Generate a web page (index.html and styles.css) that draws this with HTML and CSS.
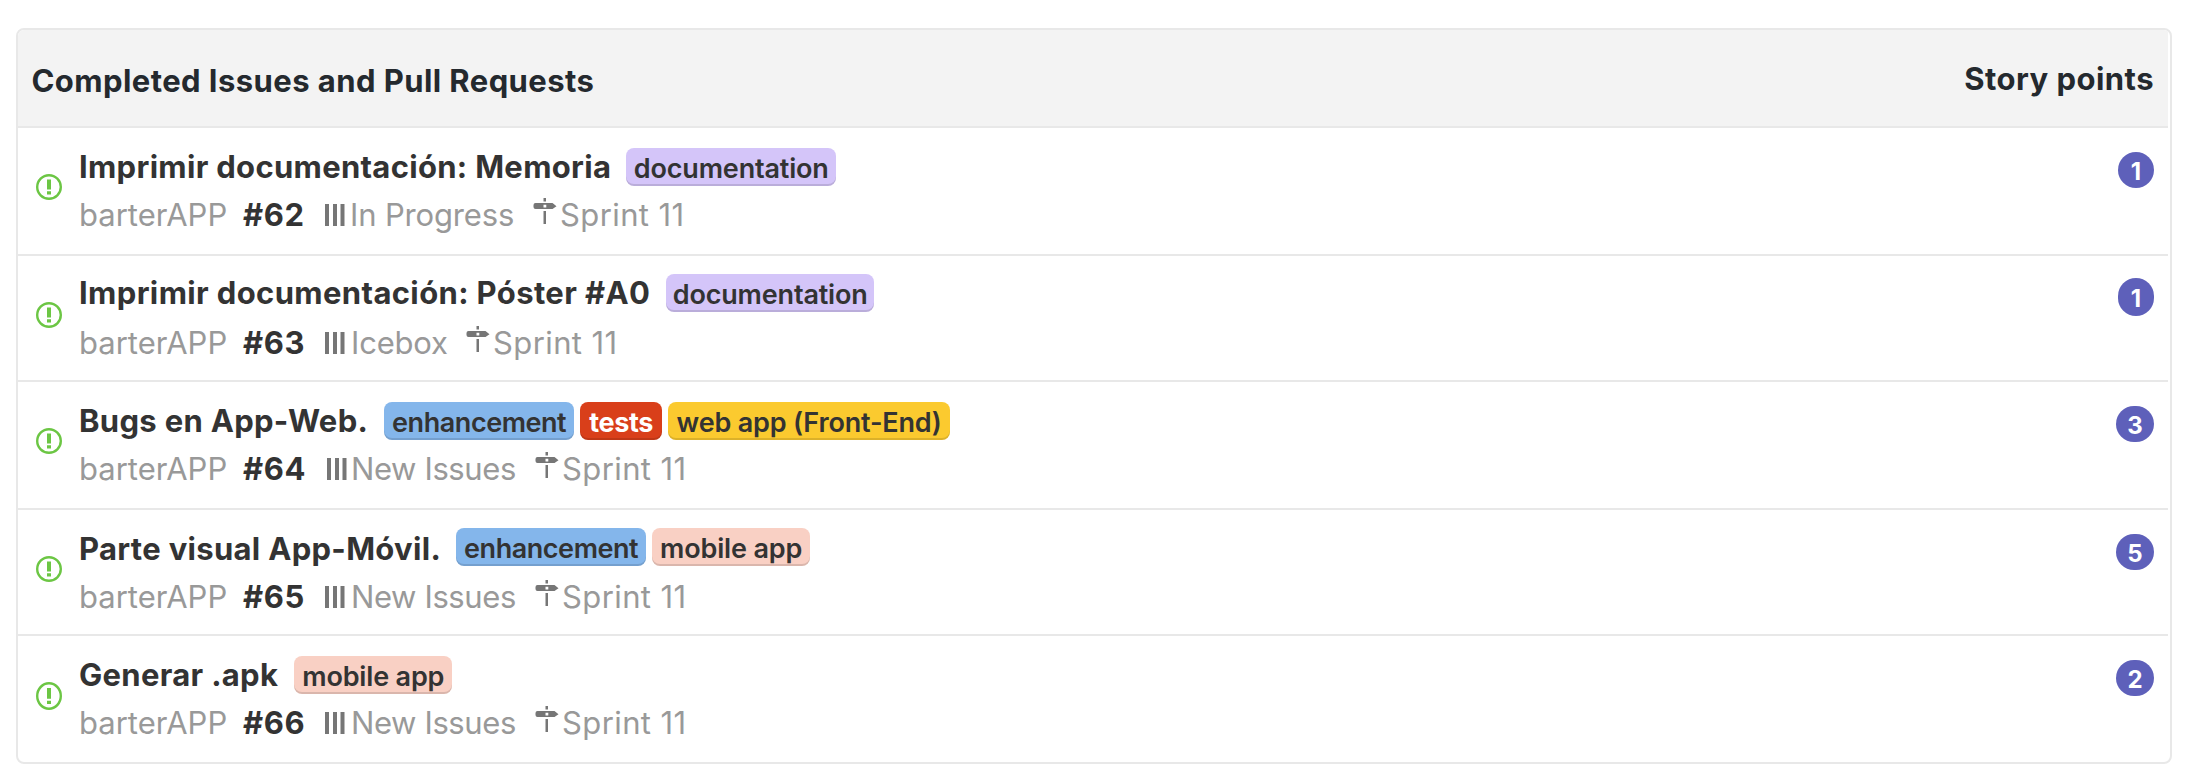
FILE: index.html
```
<!DOCTYPE html>
<html lang="es">
<head>
<meta charset="utf-8">
<title>Completed Issues and Pull Requests</title>
<link rel="stylesheet" href="styles.css">
</head>
<body>
<svg class="sprites" width="0" height="0" aria-hidden="true">
  <symbol id="open" viewBox="0 0 26 26" preserveAspectRatio="none"><circle cx="13" cy="13" r="11.800" fill="none" stroke="#6cc644" stroke-width="2.400"/><path fill="#6cc644" d="M11 5.500h4v10h-4zM11 17.300h4v3.200h-4z"/></symbol>
  <symbol id="bars" viewBox="0 0 20 22"><path fill="#767676" d="M0 0h4v22H0zM8 0h4v22H8zM15.500 0h4v22h-4z"/></symbol>
  <symbol id="sign" viewBox="0 0 24 26"><path fill="#767676" fill-rule="evenodd" d="M10.500 0h2.500v3.500h-2.500zM2.500 5h17l4 3.300L19.500 11h-17Q.5 11 .5 9V7Q.5 5 2.500 5zM10.500 6.800v2.800h2.800V6.800zM10.500 13h2.500v13h-2.500z"/></symbol>
</svg>
<section class="panel">
  <header class="head"><h1 class="head-title">Completed Issues and Pull Requests</h1><span class="head-points">Story points</span></header>
  <article class="row">
    <svg class="state"><use href="#open"/></svg>
    <div class="body">
      <div class="line"><h2 class="title">Imprimir documentación: Memoria</h2><span class="label doc wide">documentation</span></div>
      <div class="meta"><span class="repo">barterAPP</span><b class="num">#62</b><svg class="bars"><use href="#bars"/></svg><span class="pipe progress">In Progress</span><svg class="sign"><use href="#sign"/></svg><span class="sprint">Sprint 11</span></div>
    </div>
    <span class="points">1</span>
  </article>
  <article class="row short raised">
    <svg class="state"><use href="#open"/></svg>
    <div class="body">
      <div class="line"><h2 class="title">Imprimir documentación: Póster #A0</h2><span class="label doc">documentation</span></div>
      <div class="meta"><span class="repo">barterAPP</span><b class="num">#63</b><svg class="bars"><use href="#bars"/></svg><span class="pipe icebox">Icebox</span><svg class="sign"><use href="#sign"/></svg><span class="sprint">Sprint 11</span></div>
    </div>
    <span class="points tall">1</span>
  </article>
  <article class="row">
    <svg class="state"><use href="#open"/></svg>
    <div class="body">
      <div class="line"><h2 class="title roomy">Bugs en App-Web.</h2><span class="label enh">enhancement</span><span class="label tests">tests</span><span class="label web">web app (Front-End)</span></div>
      <div class="meta"><span class="repo">barterAPP</span><b class="num">#64</b><svg class="bars shifted"><use href="#bars"/></svg><span class="pipe">New Issues</span><svg class="sign"><use href="#sign"/></svg><span class="sprint">Sprint 11</span></div>
    </div>
    <span class="points broad">3</span>
  </article>
  <article class="row short">
    <svg class="state"><use href="#open"/></svg>
    <div class="body">
      <div class="line"><h2 class="title">Parte visual App-Móvil.</h2><span class="label enh">enhancement</span><span class="label mobile">mobile app</span></div>
      <div class="meta"><span class="repo">barterAPP</span><b class="num">#65</b><svg class="bars"><use href="#bars"/></svg><span class="pipe">New Issues</span><svg class="sign"><use href="#sign"/></svg><span class="sprint">Sprint 11</span></div>
    </div>
    <span class="points broad">5</span>
  </article>
  <article class="row last">
    <svg class="state"><use href="#open"/></svg>
    <div class="body">
      <div class="line"><h2 class="title roomy">Generar .apk</h2><span class="label mobile">mobile app</span></div>
      <div class="meta"><span class="repo">barterAPP</span><b class="num">#66</b><svg class="bars"><use href="#bars"/></svg><span class="pipe">New Issues</span><svg class="sign"><use href="#sign"/></svg><span class="sprint">Sprint 11</span></div>
    </div>
    <span class="points broad">2</span>
  </article>
</section>
</body>
</html>
```
FILE: styles.css
```
* { box-sizing: border-box; }
body {
  margin: 0;
  padding: 28px 38px 0 16px;
  background: #fff;
  color: #333;
  font-family: Inter, "Noto Sans", sans-serif;
  font-size: 31px;
}
h1, h2 { margin: 0; font-size: inherit; }
.sprites { display: block; }
.panel {
  height: 736px;
  padding-right: 2px;
  border: 2px solid #e8e8e8;
  border-radius: 8px;
  overflow: hidden;
}
.head {
  display: flex;
  justify-content: space-between;
  height: 98px;
  padding: 31px 14px 0 13.5px;
  border-bottom: 2px solid #e8e8e8;
  background: #f3f3f3;
  color: #24292e;
  font-weight: 700;
  line-height: 40px;
}
.head-title { letter-spacing: 0.43px; }
.head-points { letter-spacing: 0.47px; margin-top: -2px; }

.row {
  display: flex;
  align-items: flex-start;
  height: 128px;
  padding: 18px 14px 0 18px;
  border-bottom: 2px solid #e8e8e8;
}
.short { height: 126px; }
.last { border-bottom: 0; }
.state { width: 26px; height: 26px; margin-top: 28px; flex: none; }
.last .state { height: 28px; }
.body { flex: 1; padding-left: 17px; }
.line { display: flex; align-items: flex-start; height: 41px; }
.title {
  margin: 1px 15px 0 0;
  font-weight: 700;
  line-height: 40px;
  letter-spacing: 0.31px;
  white-space: nowrap;
}
.roomy { margin-right: 16px; }
.raised .title { margin: -1px 16px 0 0; letter-spacing: 0.37px; }
.label {
  height: 38px;
  margin: 2px 6px 0 0;
  border-radius: 8px;
  box-shadow: inset 0 -2px 0 rgba(0, 0, 0, 0.12);
  font-size: 27px;
  font-weight: 600;
  line-height: 41px;
  text-align: center;
  letter-spacing: -0.17px;
  white-space: nowrap;
}
.short .label { margin-top: 0; }
.doc { width: 208px; background: #d4c5f9; }
.wide { width: 210px; }
.enh { width: 190px; background: #84b6eb; letter-spacing: -0.45px; }
.tests { width: 82px; background: #d93f1a; color: #fff; font-weight: 700; letter-spacing: -0.38px; }
.web { width: 282px; background: #fbca2f; }
.mobile { width: 158px; background: #f9d0c4; }

.meta {
  display: flex;
  align-items: flex-start;
  margin-top: 8px;
  color: #999;
  line-height: 40px;
  white-space: nowrap;
}
.repo { width: 164px; }
.num { width: 82px; color: #333; letter-spacing: 0.63px; }
.bars { width: 20px; height: 22px; margin-top: 9px; flex: none; }
.shifted { margin: 9px -2px 0 2px; }
.pipe { width: 189px; padding-left: 5px; margin-left: 1px; letter-spacing: -0.38px; }
.progress { width: 187px; padding-left: 4px; letter-spacing: -0.15px; }
.icebox { width: 120px; letter-spacing: -0.2px; }
.sign { width: 24px; height: 26px; margin-top: 3px; flex: none; }
.sprint { padding-left: 3px; letter-spacing: 0.4px; }

.points {
  width: 36px;
  height: 36px;
  margin-top: 6px;
  border-radius: 18px;
  background: #5e60ba;
  color: #fff;
  font-size: 24px;
  font-weight: 700;
  line-height: 39px;
  text-align: center;
}
.tall { height: 38px; margin-top: 4px; line-height: 41px; }
.broad { width: 38px; }
```
